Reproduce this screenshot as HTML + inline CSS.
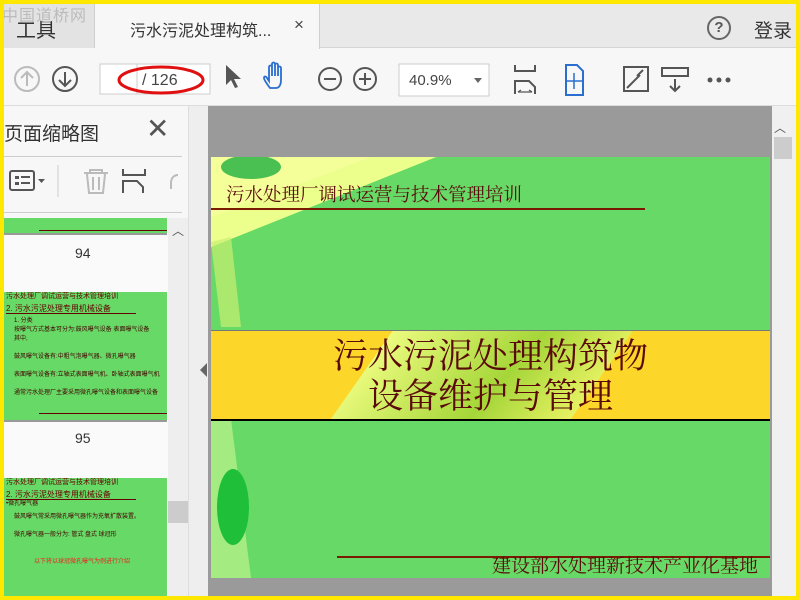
<!DOCTYPE html>
<html><head><meta charset="utf-8"><style>
*{margin:0;padding:0;box-sizing:border-box}
body{width:800px;height:600px;background:#ffe800;position:relative;overflow:hidden;font-family:"Liberation Sans","Noto Sans CJK SC",sans-serif}
.abs{position:absolute}
.cjk{font-family:"Liberation Serif","Noto Serif CJK SC",serif}
</style></head><body>
<div class="abs" style="left:4px;top:4px;width:792px;height:592px;background:#f7f7f7;overflow:hidden">
 <div class="abs" style="left:0;top:0;width:792px;height:44px;background:#e9e9e9;border-bottom:1px solid #d4d4d4"></div>
 <div class="abs" style="left:-4px;top:-4px;width:95px;height:48px;background:#e3e3e3;border-right:1px solid #cfcfcf"></div>
 <div class="abs" style="left:12px;top:10px;font-size:20px;color:#333">工具</div>
 <div class="abs" style="left:-2px;top:-2px;font-size:16px;color:#bbb;letter-spacing:1px">中国道桥网</div>
 <div class="abs" style="left:91px;top:-4px;width:225px;height:49px;background:#f7f7f7;border-right:1px solid #cfcfcf"></div>
 <div class="abs" style="left:126px;top:13px;font-size:16px;color:#333">污水污泥处理构筑...</div>
 <div class="abs" style="left:290px;top:11px;font-size:17px;color:#444">×</div>
 <div class="abs" style="left:703px;top:12px;width:24px;height:24px;border:2px solid #666;border-radius:50%;text-align:center;font-size:15px;line-height:20px;color:#555;font-weight:bold">?</div>
 <div class="abs" style="left:750px;top:12px;font-size:19px;color:#333">登录</div>
 <svg class="abs" style="left:0;top:44px" width="792" height="60">
  <g fill="none" stroke-width="2">
   <circle cx="23" cy="31" r="12" stroke="#bbb"/><path d="M23 38V24M17 30l6-6 6 6" stroke="#bbb"/>
   <circle cx="61" cy="31" r="12" stroke="#555"/><path d="M61 24v14M55 32l6 6 6-6" stroke="#555"/>
   <circle cx="326" cy="31" r="11" stroke="#555"/><path d="M320 31h12" stroke="#555"/>
   <circle cx="361" cy="31" r="11" stroke="#555"/><path d="M355 31h12M361 25v12" stroke="#555"/>
  </g>
  <path d="M222 17v20l5-5 4 8 3-1-4-8h7z" fill="#555"/>
  <path d="M266 40c-3-4-6-8-6-10s2-2 3 0l2 3V19c0-2 3-2 3 0v9V16c0-2 3-2 3 0v12V17c0-2 3-2 3 0v11V20c0-2 3-2 3 0v12c0 5-2 8-5 8z" fill="none" stroke="#2a6ed0" stroke-width="1.8"/>
  <rect x="96" y="16" width="110" height="30" fill="#fff" stroke="#ccc"/>
  <line x1="133" y1="16" x2="133" y2="46" stroke="#ccc"/>
  <text x="138" y="37" font-size="16" fill="#444" font-family="Liberation Sans">/ 126</text>
  <ellipse cx="157" cy="32" rx="42" ry="13" fill="none" stroke="#e01010" stroke-width="3"/>
  <rect x="395" y="16" width="90" height="32" fill="#fff" stroke="#ccc"/>
  <text x="405" y="37" font-size="15" fill="#444" font-family="Liberation Sans">40.9%</text>
  <path d="M470 30h8l-4 5z" fill="#666"/>
  <g fill="none" stroke="#555" stroke-width="2"><path d="M511 17v6h20v-6M511 46V33h14l6 6v7"/><path d="M514 44h14M514 44l3-2M528 44l-3-2" stroke-width="1.3"/>
  <rect x="620" y="19" width="24" height="24"/><path d="M628 35l8-8M623 40l5-5M639 22l-6 6"/>
  <rect x="658" y="20" width="26" height="8"/><path d="M671 31v12M666 38l5 5 5-5"/></g>
  <path d="M562 17h11l6 6v24h-17z" fill="none" stroke="#2a6ed0" stroke-width="2"/>
  <path d="M570 25v16M562 33h16" stroke="#2a6ed0" stroke-width="1.5"/>
  <circle cx="706" cy="32" r="2.5" fill="#555"/><circle cx="715" cy="32" r="2.5" fill="#555"/><circle cx="724" cy="32" r="2.5" fill="#555"/>
 </svg>
 <div class="abs" style="left:0;top:101px;width:792px;height:1px;background:#ddd"></div>
 <div class="abs" style="left:0;top:102px;width:184px;height:490px;background:#f7f7f7"></div>
 <div class="abs" style="left:0;top:115px;font-size:19px;color:#333">页面缩略图</div>
 <div class="abs" style="left:142px;top:108px;font-size:28px;color:#555;font-weight:200">✕</div>
 <div class="abs" style="left:0;top:152px;width:178px;height:1px;background:#ccc"></div>
 <svg class="abs" style="left:0;top:155px" width="180" height="55">
  <rect x="6" y="12" width="24" height="19" rx="2" fill="none" stroke="#555" stroke-width="2"/>
  <rect x="11" y="17" width="4" height="3" fill="#555"/><rect x="11" y="23" width="4" height="3" fill="#555"/>
  <path d="M17 18h9M17 24h9" stroke="#555" stroke-width="2"/><path d="M34 20h7l-3.5 4z" fill="#555"/>
  <line x1="54" y1="6" x2="54" y2="38" stroke="#ccc"/>
  <path d="M80 14h24M86 14v-3h12v3M83 15l2 19h14l2-19M89 18v13M95 18v13" fill="none" stroke="#bbb" stroke-width="2"/>
  <path d="M119 10v6h22v-6M119 34V22h14l6 6v6" fill="none" stroke="#555" stroke-width="2"/>
  <path d="M174 16c-4 0-7 3-7 8v6" fill="none" stroke="#bbb" stroke-width="2"/>
 </svg>
 <div class="abs" style="left:0;top:208px;width:178px;height:1px;background:#ccc"></div>
 <div class="abs" style="left:0;top:214px;width:164px;height:378px;background:#fafafa"></div>
 <div class="abs" style="left:164px;top:214px;width:20px;height:378px;background:#eee"></div>
 <div class="abs" style="left:168px;top:218px;font-size:12px;color:#555">︿</div>
 <div class="abs" style="left:164px;top:497px;width:20px;height:22px;background:#ccc"></div>
 <div class="abs" style="left:0;top:214px;width:163px;height:17px;background:#66d966;border-bottom:2px solid #999"></div>
 <div class="abs" style="left:35px;top:226px;width:128px;height:1px;background:#600"></div>
 <div class="abs" style="left:71px;top:241px;font-size:14px;color:#333">94</div>
 <div class="abs" style="left:0;top:288px;width:163px;height:130px;background:#66d966;border-bottom:2px solid #999;font-size:6px;color:#400;line-height:9px;padding-left:2px">
  <div style="color:#600;font-size:7px">污水处理厂调试运营与技术管理培训</div>
  <div style="color:#600;font-size:8px;border-bottom:1px solid #600;width:130px;margin-top:3px">2. 污水污泥处理专用机械设备</div>
  <div style="margin:3px 0 0 8px">1. 分类<br>按曝气方式基本可分为:鼓风曝气设备 表面曝气设备<br>其中,<br><br>鼓风曝气设备有:中粗气泡曝气器、微孔曝气器<br><br>表面曝气设备有:立轴式表面曝气机、卧轴式表面曝气机<br><br>通常污水处理厂主要采用微孔曝气设备和表面曝气设备</div>
 </div>
 <div class="abs" style="left:35px;top:409px;width:128px;height:1px;background:#600"></div>
 <div class="abs" style="left:71px;top:426px;font-size:14px;color:#333">95</div>
 <div class="abs" style="left:0;top:474px;width:163px;height:118px;background:#66d966;font-size:6px;color:#400;line-height:9px;padding-left:2px">
  <div style="color:#600;font-size:7px">污水处理厂调试运营与技术管理培训</div>
  <div style="color:#600;font-size:8px;border-bottom:1px solid #600;width:130px;margin-top:3px">2. 污水污泥处理专用机械设备</div>
  <div>•微孔曝气器</div>
  <div style="margin:4px 0 0 8px">鼓风曝气常采用微孔曝气器作为充氧扩散装置。<br><br>微孔曝气器一般分为: 管式 盘式 球冠形<br><br><br><span style="color:#e22;margin-left:20px">以下将以球冠微孔曝气为例进行介绍</span></div>
 </div>
 <div class="abs" style="left:184px;top:102px;width:20px;height:490px;background:#eee;border-left:1px solid #ddd"></div>
 <div class="abs" style="left:196px;top:359px;width:0;height:0;border-top:7px solid transparent;border-bottom:7px solid transparent;border-right:7px solid #666"></div>
 <div class="abs" style="left:204px;top:102px;width:564px;height:490px;background:#9a9a9a"></div>
 <div class="abs" style="left:768px;top:102px;width:24px;height:490px;background:#f0f0f0"></div>
 <div class="abs" style="left:770px;top:115px;font-size:12px;color:#555">︿</div>
 <div class="abs" style="left:770px;top:133px;width:18px;height:22px;background:#ccc"></div>
 <div class="abs" style="left:207px;top:153px;width:559px;height:421px;background:#66d966;overflow:hidden">
  <svg class="abs" style="left:0;top:0" width="559" height="421">
   <polygon points="0,0 225,0 0,90" fill="#f5ff9a"/>
   <polygon points="0,90 225,0 160,0 0,60" fill="#e8ff88" opacity=".7"/>
   <polygon points="0,85 10,170 30,170 20,80" fill="#c8f070" opacity=".7"/>
   <polygon points="0,262 20,262 40,421 0,421" fill="#b4f088" opacity=".8"/>
   <ellipse cx="22" cy="350" rx="16" ry="38" fill="#1fbf3a"/>
   <ellipse cx="40" cy="10" rx="30" ry="12" fill="#20b040" opacity=".8"/>
  </svg>
  <div class="abs cjk" style="left:15px;top:24px;font-size:18.5px;color:#5a0a0a">污水处理厂调试运营与技术管理培训</div>
  <div class="abs" style="left:0;top:51px;width:434px;height:2px;background:#7a1a00"></div>
  <div class="abs" style="left:0;top:173px;width:559px;height:91px;background:#fcd72a;border-top:1px solid #777;border-bottom:2px solid #000;overflow:hidden">
   <div class="abs" style="left:150px;top:0;width:240px;height:90px;background:linear-gradient(100deg,#eaff88,#9bd63a 60%,#e5f56a);transform:skewX(-35deg);opacity:.9"></div>
  </div>
  <div class="abs cjk" style="left:0;top:180px;width:559px;text-align:center;font-size:35px;line-height:40px;color:#5a0a0a">污水污泥处理构筑物<br>设备维护与管理</div>
  <div class="abs" style="left:126px;top:399px;width:433px;height:2px;background:#7a1a00"></div>
  <div class="abs cjk" style="left:281px;top:400px;font-size:19px;line-height:1;color:#5a0a0a">建设部水处理新技术产业化基地</div>
 </div>
</div>
</body></html>
